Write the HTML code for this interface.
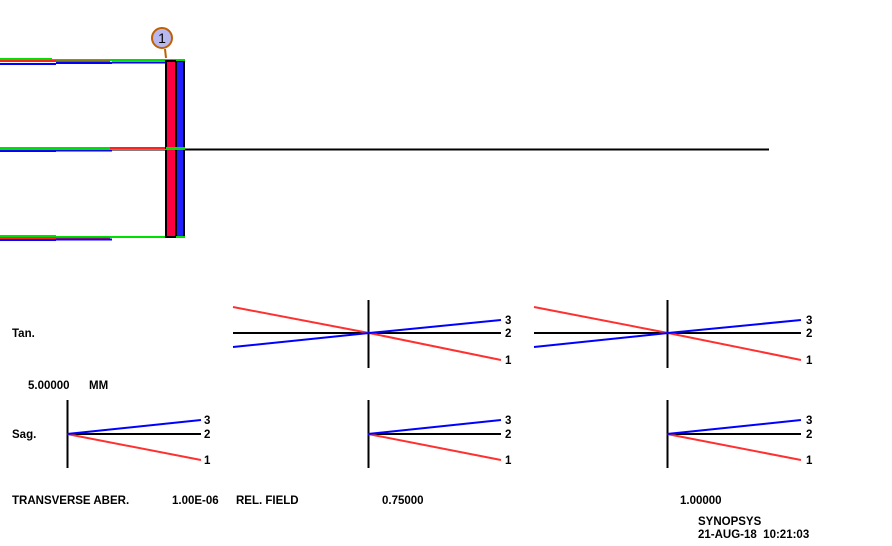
<!DOCTYPE html>
<html><head><meta charset="utf-8"><style>
html,body{margin:0;padding:0;background:#fff;width:892px;height:546px;overflow:hidden}
text{font-family:"Liberation Sans",Arial,sans-serif;font-weight:bold;font-size:11.5px;fill:#000;white-space:pre}
</style></head><body>
<svg width="892" height="546" viewBox="0 0 892 546" xmlns="http://www.w3.org/2000/svg">
<rect width="892" height="546" fill="#fff"/>
<line x1="0" y1="149.5" x2="769" y2="149.5" stroke="#000" stroke-width="2"/>
<g stroke-width="2" fill="none">
<path d="M0 59 H52 M52 60 H185" stroke="#00e000"/>
<path d="M0 61 H56 M56 61.5 H110" stroke="#ff2020"/>
<path d="M0 64 H56 M56 63 H112 M112 62.5 H168" stroke="#0000ff"/>
<path d="M0 148 H56 H185" stroke="#00e000"/>
<path d="M110 148 H170" stroke="#ff2020"/>
<path d="M0 151 H56 M56 150.5 H112" stroke="#0000ff"/>
<path d="M0 236 H56 M56 237 H185" stroke="#00e000"/>
<path d="M0 238 H56 M56 238.5 H110" stroke="#ff2020"/>
<path d="M0 240 H56 M56 239.5 H112" stroke="#0000ff"/>
</g>
<rect x="166" y="61" width="10" height="176" fill="#ff0040" stroke="#000" stroke-width="2"/>
<rect x="176" y="61" width="8" height="176" fill="#2020ff" stroke="#000" stroke-width="2"/>
<line x1="0" y1="149.5" x2="185" y2="149.5" stroke="#00e000" stroke-width="1"/>
<line x1="166" y1="148" x2="185" y2="148" stroke="#00e000" stroke-width="2"/>
<line x1="176" y1="60" x2="185" y2="60" stroke="#00e000" stroke-width="2"/>
<line x1="176" y1="237" x2="185" y2="237" stroke="#00e000" stroke-width="2"/>
<line x1="165" y1="49" x2="166" y2="58" stroke="#c06000" stroke-width="2"/>
<circle cx="162" cy="38" r="10" fill="#b8b8f0" stroke="#c06000" stroke-width="2"/>
<text x="162" y="43" text-anchor="middle" style="font-weight:normal;font-size:14px">1</text>
<g stroke-width="2" fill="none">
<line x1="233" y1="333" x2="501" y2="333" stroke="#000"/>
<line x1="368.5" y1="300" x2="368.5" y2="368" stroke="#000"/>
<path d="M233 307 L369 333 L501 360" stroke="#ff3030"/>
<path d="M233 347 L369 333 L501 320" stroke="#0000ff"/>
<line x1="534" y1="333" x2="801" y2="333" stroke="#000"/>
<line x1="667.5" y1="300" x2="667.5" y2="368" stroke="#000"/>
<path d="M534 307 L668 333 L801 360" stroke="#ff3030"/>
<path d="M534 347 L668 333 L801 320" stroke="#0000ff"/>
<line x1="67" y1="434" x2="201" y2="434" stroke="#000"/>
<line x1="67.5" y1="400" x2="67.5" y2="468" stroke="#000"/>
<path d="M67 434 L201 460" stroke="#ff3030"/>
<path d="M67 434 L201 420" stroke="#0000ff"/>
<line x1="368" y1="434" x2="501" y2="434" stroke="#000"/>
<line x1="368.5" y1="400" x2="368.5" y2="468" stroke="#000"/>
<path d="M368 434 L501 460" stroke="#ff3030"/>
<path d="M368 434 L501 420" stroke="#0000ff"/>
<line x1="667" y1="434" x2="801" y2="434" stroke="#000"/>
<line x1="667.5" y1="400" x2="667.5" y2="468" stroke="#000"/>
<path d="M667 434 L801 460" stroke="#ff3030"/>
<path d="M667 434 L801 420" stroke="#0000ff"/>
</g>
<g>
<text x="505" y="324">3</text><text x="505" y="337">2</text><text x="505" y="364">1</text>
<text x="806" y="324">3</text><text x="806" y="337">2</text><text x="806" y="364">1</text>
<text x="204" y="424">3</text><text x="204" y="438">2</text><text x="204" y="464">1</text>
<text x="505" y="424">3</text><text x="505" y="438">2</text><text x="505" y="464">1</text>
<text x="806" y="424">3</text><text x="806" y="438">2</text><text x="806" y="464">1</text>
</g>
<text x="12" y="337">Tan.</text>
<text x="28" y="389">5.00000</text>
<text x="89" y="389">MM</text>
<text x="12" y="438">Sag.</text>
<text x="12" y="504">TRANSVERSE ABER.</text>
<text x="172" y="504">1.00E-06</text>
<text x="236" y="504">REL. FIELD</text>
<text x="382" y="504">0.75000</text>
<text x="680" y="504">1.00000</text>
<text x="698" y="525">SYNOPSYS</text>
<text x="698" y="538">21-AUG-18  10:21:03</text>
</svg>
</body></html>
